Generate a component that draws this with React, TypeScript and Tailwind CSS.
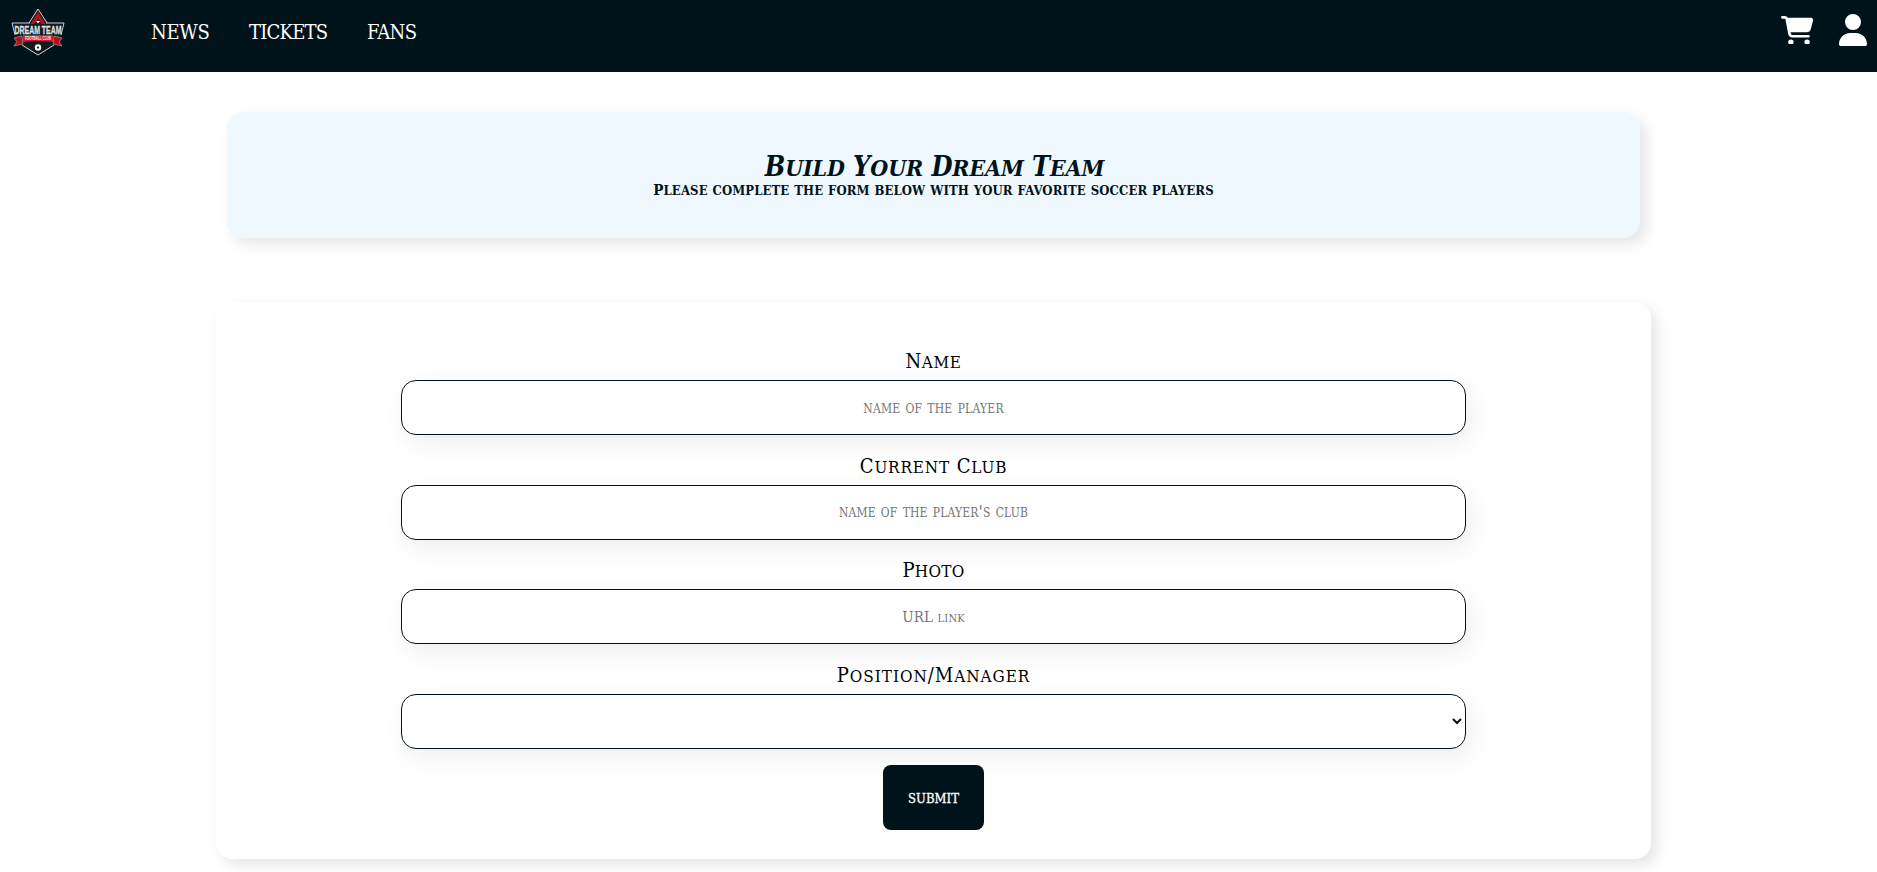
import React from "react";
import { FaCartShopping, FaUser } from "react-icons/fa6";

// Splits each word into its capital and the remaining small capitals.
function Caps({ text }: { text: string }) {
  return (
    <>
      {text.split(/(?=[\s/])/).map((w, i) => {
        const m = w.match(/^([\s/]*[A-Z]?)(.*)$/)!;
        return (
          <React.Fragment key={i}>
            {m[1]}
            <span className="text-[1.2em]">{m[2]}</span>
          </React.Fragment>
        );
      })}
    </>
  );
}

function Logo() {
  return (
    <svg viewBox="0 0 56 48" className="h-12 w-14 overflow-visible" fill="none">
      <path d="M28 1 L34.5 13 L54 15 L52 28 L53 37 L44 36 L28 47 L12 36 L3 37 L5 28 L2 15 L21.500 13 Z" fill="#101a20" />
      <path d="M19 15 L28 1 L37 15" stroke="#d8dcde" strokeWidth="1" />
      <path d="M20.500 16 L28 4 L35.500 16 H31.500 L28 10 L24.500 16 Z" fill="#b5101c" />
      <path d="M26 13 h4 l-2 2.500 z" fill="#fff" />
      <path d="M2 15 H20 M36 15 H54 L51 27 M2 15 L5 27" stroke="#c9cdd0" strokeWidth="1" />
      <path d="M12 37 L28 47 L44 37" stroke="#d8dcde" strokeWidth="1" />
      <path d="M4 30 L12 28 L13 36 L4 38 L7 34 Z M52 30 L44 28 L43 36 L52 38 L49 34 Z" fill="#b5101c" stroke="#c9cdd0" strokeWidth=".5" />
      <path d="M13 27 H43 V34 Q28 32 13 34 Z" fill="#d3182a" />
      <text x="28" y="25.500" textAnchor="middle" textLength="47" lengthAdjust="spacingAndGlyphs" fill="#dfe2e4" stroke="#dfe2e4" strokeWidth=".3" fontFamily="Liberation Sans" fontWeight="700" fontSize="11.500">DREAM TEAM</text>
      <text x="28" y="32.300" textAnchor="middle" textLength="26" lengthAdjust="spacingAndGlyphs" fill="#fff" fontFamily="Liberation Sans" fontWeight="700" fontSize="5.500">FOOTBALL CLUB</text>
      <circle cx="28" cy="39.500" r="3.200" fill="#fff" />
      <path d="M28 38.300 l1.200 .9 -.5 1.400 h-1.400 l-.5 -1.400 z" fill="#0a151b" />
    </svg>
  );
}

const box =
  "block h-[55px] w-full rounded-[15px] border border-[#01131a] bg-white text-center [font-variant-caps:small-caps] placeholder:text-[#757575] placeholder:opacity-100 shadow-[5px_8px_25px_rgba(0,0,0,0.07)] outline-none";

const fields = [
  { label: "Name", hint: "name of the player", labelClass: "tracking-[0.6px]", hintClass: "pb-[2px] text-[17.5px] tracking-[0.2px]" },
  { label: "Current Club", hint: "name of the player's club", labelClass: "tracking-[0.85px]", hintClass: "pb-[2px] text-[17.5px] tracking-[0.15px]" },
  { label: "Photo", hint: "URL link", labelClass: "tracking-[0.3px]", hintClass: "text-[15px] tracking-[0.15px]" },
  { label: "Position/Manager", hint: "", labelClass: "tracking-[0.95px]", hintClass: "text-[16px]" },
];

export default function App() {
  return (
    <div className="h-[872px] overflow-hidden bg-white font-['DejaVu_Serif_Condensed','DejaVu_Serif',serif] text-[#01131a]">
      <header className="flex h-[72px] items-start bg-[#01131a] text-white">
        <div className="ml-[10px] mt-2 w-14"><Logo /></div>
        <nav className="ml-[85px] flex pt-5 text-[20px] leading-6">
          <a className="w-[98px] tracking-[-0.3px]">NEWS</a>
          <a className="w-[118px] tracking-[-0.8px]">TICKETS</a>
          <a className="tracking-[-0.6px]">FANS</a>
        </nav>
        <div className="ml-auto mr-[10px] flex gap-[26px] pt-[14px]">
          <FaCartShopping className="mt-[1.6px] h-[28.8px] w-[32.4px]" />
          <FaUser className="h-8 w-7" />
        </div>
      </header>
      <main className="flex w-[1867px] flex-col items-center pt-10">
        <section className="flex h-[126px] w-[1413px] flex-col items-center rounded-2xl bg-[#eff7ff] pt-[37px] shadow-[6px_6px_14px_rgba(0,0,0,0.1)] [font-variant-caps:small-caps]">
          <h1 className="h-[30px] whitespace-nowrap pl-0.5 text-[27px] font-bold italic leading-8 tracking-[-0.15px]"><Caps text="Build Your Dream Team" /></h1>
          <p className="h-5 whitespace-nowrap text-[15px] font-bold leading-5 tracking-[0.11px]"><Caps text="Please complete the form below with your favorite soccer players" /></p>
        </section>
        <form className="mt-16 flex h-[557px] w-[1435px] flex-col items-center rounded-2xl bg-white pt-[46px] shadow-[6px_6px_14px_rgba(0,0,0,0.1)]">
          {fields.map((f, i) => (
            <label key={f.label} className="block h-[104.7px] w-[1065px]">
              <span className={`block h-8 text-center text-[20px] leading-6 text-black [font-variant-caps:small-caps] ${f.labelClass}`}><Caps text={f.label} /></span>
              {i < 3 ? <input className={`${box} ${f.hintClass}`} placeholder={f.hint} /> : <select className={`${box} pr-px ${f.hintClass}`}><option></option></select>}
            </label>
          ))}
          <button type="button" className="mt-[-2px] h-[65px] w-[101px] rounded-lg bg-[#01131a] pb-[3px] text-[19px] text-white [-webkit-text-stroke:0.3px_white] [font-variant-caps:small-caps]">submit</button>
        </form>
      </main>
    </div>
  );
}
